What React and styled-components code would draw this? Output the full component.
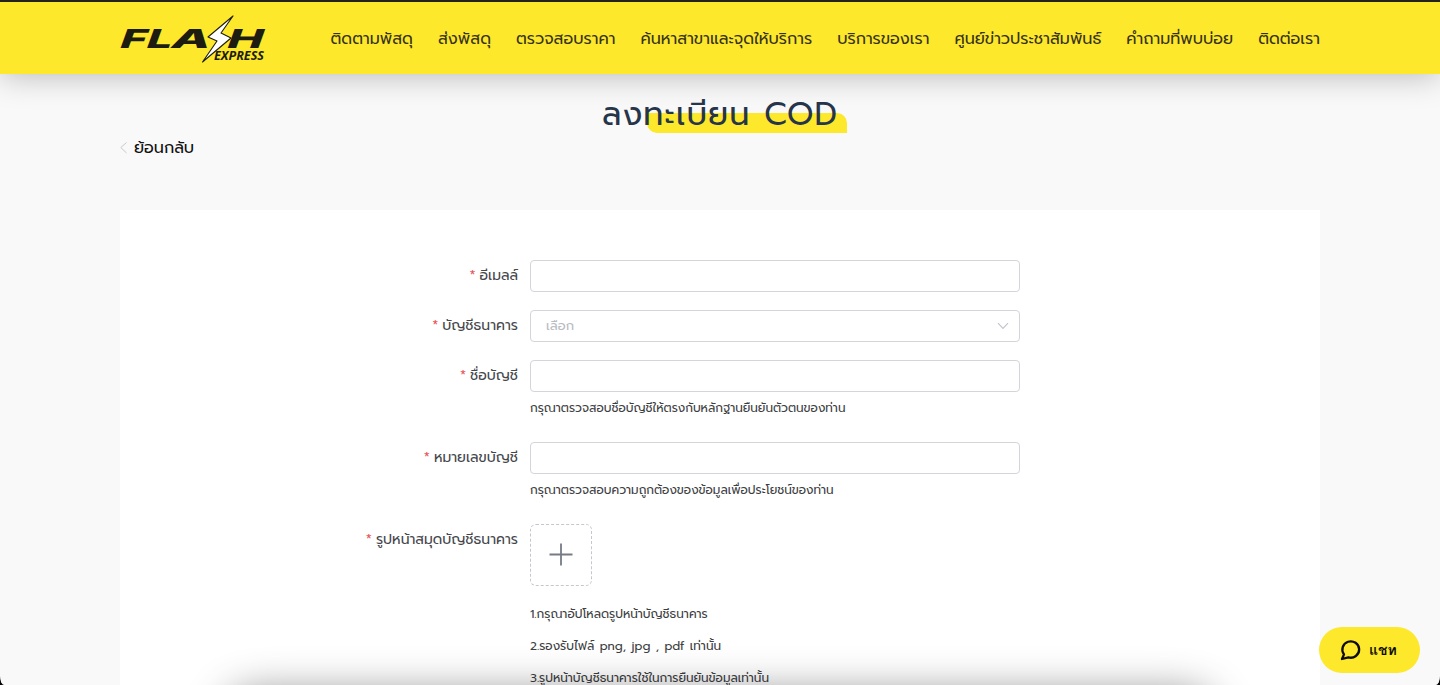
import React from 'react';
import styled, { createGlobalStyle } from 'styled-components';

const links = [
  'ติดตามพัสดุ',
  'ส่งพัสดุ',
  'ตรวจสอบราคา',
  'ค้นหาสาขาและจุดให้บริการ',
  'บริการของเรา',
  'ศูนย์ข่าวประชาสัมพันธ์',
  'คำถามที่พบบ่อย',
  'ติดต่อเรา',
];

const Logo = () => (
  <LogoSvg viewBox='0 0 146 50' role='img' aria-label='Flash Express'>
    <g transform='translate(0 34.5) skewX(-20)'>
      <LogoText x='-2' y='0' textLength='52' lengthAdjust='spacingAndGlyphs'>
        FL
      </LogoText>
      <LogoText x='49' y='0' textLength='39' lengthAdjust='spacingAndGlyphs'>
        A
      </LogoText>
      <LogoText x='105' y='0' textLength='36' lengthAdjust='spacingAndGlyphs'>
        H
      </LogoText>
    </g>
    <path
      d='M113 3 L88 24 L97 28 L82.5 49 L111 25 L101 20 Z'
      fill='#fff'
      stroke='#1d1c10'
      strokeWidth='1.1'
      strokeLinejoin='round'
    />
    <LogoSub x='94' y='47' textLength='50' lengthAdjust='spacingAndGlyphs'>
      EXPRESS
    </LogoSub>
  </LogoSvg>
);

const Field = ({ label, hint, children }) => (
  <FormItem>
    <Label>
      <Star>*</Star>
      {label}
    </Label>
    <Content>
      {children}
      {hint && <Note>{hint}</Note>}
    </Content>
  </FormItem>
);

const App = () => {
  return (
    <Page>
      <GlobalStyle />
      <Header>
        <HeaderInner>
          <Logo />
          <Nav>
            {links.map((link) => (
              <NavLink key={link}>{link}</NavLink>
            ))}
          </Nav>
        </HeaderInner>
      </Header>
      <Main>
        <Title>ลงทะเบียน COD</Title>
        <Back>
          <svg width='8' height='14' viewBox='0 0 8 14' fill='none' stroke='#c8c8c8'>
            <path d='M6.5 1.5 L0.8 6.5 L6.5 12' />
          </svg>
          ย้อนกลับ
        </Back>
        <Card>
          <Field label='อีเมลล์'>
            <Input type='text' />
          </Field>
          <Field label='บัญชีธนาคาร'>
            <Select>
              เลือก
              <svg width='12' height='8' viewBox='0 0 12 8' fill='none' stroke='#c0c4cc'>
                <path d='M1 1.2 L6 6.4 L11 1.2' strokeWidth='1.1' />
              </svg>
            </Select>
          </Field>
          <Field
            label='ชื่อบัญชี'
            hint='กรุณาตรวจสอบชื่อบัญชีให้ตรงกับหลักฐานยืนยันตัวตนของท่าน'
          >
            <Input type='text' />
          </Field>
          <Field
            label='หมายเลขบัญชี'
            hint='กรุณาตรวจสอบความถูกต้องของข้อมูลเพื่อประโยชน์ของท่าน'
          >
            <Input type='text' />
          </Field>
          <Field label='รูปหน้าสมุดบัญชีธนาคาร'>
            <Upload>
              <svg width='24' height='24' viewBox='0 0 24 24' stroke='#777b86' strokeWidth='1.8'>
                <path d='M12 0.5 V22.5 M0.5 11.5 H23.5' />
              </svg>
            </Upload>
            <Notes>
              <Note>1.กรุณาอัปโหลดรูปหน้าบัญชีธนาคาร</Note>
              <Note>2.รองรับไฟล์ png, jpg , pdf เท่านั้น</Note>
              <Note>3.รูปหน้าบัญชีธนาคารใช้ในการยืนยันข้อมูลเท่านั้น</Note>
            </Notes>
          </Field>
        </Card>
      </Main>
      <BottomShade />
      <Chat>
        <svg width='22' height='22' viewBox='0 0 22 22' fill='none' stroke='#0d0d05' strokeWidth='2.3' strokeLinejoin='round'>
          <path d='M2 20 L4 15.4 A8.4 8.2 0 1 1 8.4 18.4 Z' />
        </svg>
        แชท
      </Chat>
    </Page>
  );
};

export default App;

const GlobalStyle = createGlobalStyle`
  * {
    box-sizing: border-box;
  }
  body {
    margin: 0;
    background: #050505;
    overflow: hidden;
    font-family: Prompt, 'Noto Sans Thai', 'Noto Sans', sans-serif;
  }
`;

const Page = styled.div`
  position: relative;
  height: 685px;
  overflow: hidden;
  background: #f9f9f9;
  border-radius: 0 0 4px 4px / 0 0 9px 9px;
`;

const Header = styled.header`
  position: relative;
  height: 74px;
  border-top: 2px solid #23211a;
  background: #fde82b;
  box-shadow: 0 2px 32px rgba(0, 0, 0, 0.26);
`;

const HeaderInner = styled.div`
  display: flex;
  align-items: center;
  justify-content: space-between;
  width: 1200px;
  height: 72px;
  margin: 0 auto;
`;

const LogoSvg = styled.svg`
  width: 146px;
  height: 50px;
  overflow: visible;
`;

const LogoText = styled.text`
  font-family: Inter, 'Liberation Sans', sans-serif;
  font-size: 26px;
  font-weight: 800;
  fill: #1d1c10;
`;

const LogoSub = styled.text`
  font-family: 'Open Sans', 'Liberation Sans', sans-serif;
  font-size: 12px;
  font-weight: 700;
  font-style: italic;
  fill: #1d1c10;
`;

const Nav = styled.nav`
  display: flex;
  gap: 25px;
  padding-top: 1px;
`;

const NavLink = styled.a`
  font-size: 16px;
  line-height: 24px;
  white-space: nowrap;
  color: #37331a;
`;

const Main = styled.main`
  width: 1200px;
  margin: 0 auto;
`;

const Title = styled.h1`
  position: relative;
  isolation: isolate;
  width: 236px;
  height: 60px;
  margin: 0 auto;
  font-size: 32px;
  font-weight: 400;
  line-height: 82px;
  letter-spacing: 1px;
  word-spacing: 1px;
  white-space: nowrap;
  color: #26354a;
  &::before {
    content: '';
    position: absolute;
    z-index: -1;
    left: 45px;
    top: 39px;
    width: 200px;
    height: 20px;
    border-radius: 0 10px 0 10px;
    background: #fde82b;
  }
`;

const Back = styled.a`
  display: flex;
  align-items: center;
  gap: 6px;
  height: 28px;
  font-size: 16px;
  color: #111;
`;

const Card = styled.section`
  margin-top: 48px;
  padding: 50px 300px 0 170px;
  height: 600px;
  background: #fff;
`;

const FormItem = styled.div`
  display: flex;
  margin-bottom: 18px;
`;

const Label = styled.label`
  display: flex;
  justify-content: flex-end;
  gap: 4px;
  width: 240px;
  padding-right: 12px;
  font-size: 14px;
  line-height: 32px;
  color: #45474c;
`;

const Star = styled.span`
  color: #e8565c;
`;

const Content = styled.div`
  width: 490px;
`;

const Input = styled.input`
  display: block;
  width: 100%;
  height: 32px;
  border: 1px solid #d4d5da;
  border-radius: 4px;
  background: #fff;
  outline: none;
`;

const Select = styled.div`
  display: flex;
  align-items: center;
  justify-content: space-between;
  height: 32px;
  padding: 0 10px 1px 15px;
  border: 1px solid #d4d5da;
  border-radius: 4px;
  font-size: 13px;
  line-height: 29px;
  color: #b9bbc2;
`;

const Upload = styled.button`
  display: flex;
  align-items: center;
  justify-content: center;
  width: 62px;
  height: 62px;
  padding: 0;
  border: 1px dashed #c6c7cc;
  border-radius: 6px;
  background: #fff;
`;

const Notes = styled.div`
  padding-top: 12px;
`;

const Note = styled.p`
  margin: 0;
  font-size: 12px;
  line-height: 32px;
  word-spacing: 1px;
  white-space: nowrap;
  color: #3d3e41;
`;

const BottomShade = styled.div`
  position: absolute;
  left: 225px;
  right: 225px;
  top: 692px;
  height: 80px;
  border-radius: 30px;
  box-shadow: 0 0 42px rgba(0, 0, 0, 0.44);
`;

const Chat = styled.button`
  position: absolute;
  left: 1319px;
  top: 627px;
  display: flex;
  align-items: center;
  gap: 7px;
  width: 101px;
  height: 46px;
  padding: 0 0 0 21px;
  border: none;
  border-radius: 23px;
  background: #fde82b;
  font-family: Waree, Garuda, Umpush, Loma, 'Liberation Sans', sans-serif;
  font-size: 14px;
  font-weight: 700;
  color: #0d0d05;
`;
